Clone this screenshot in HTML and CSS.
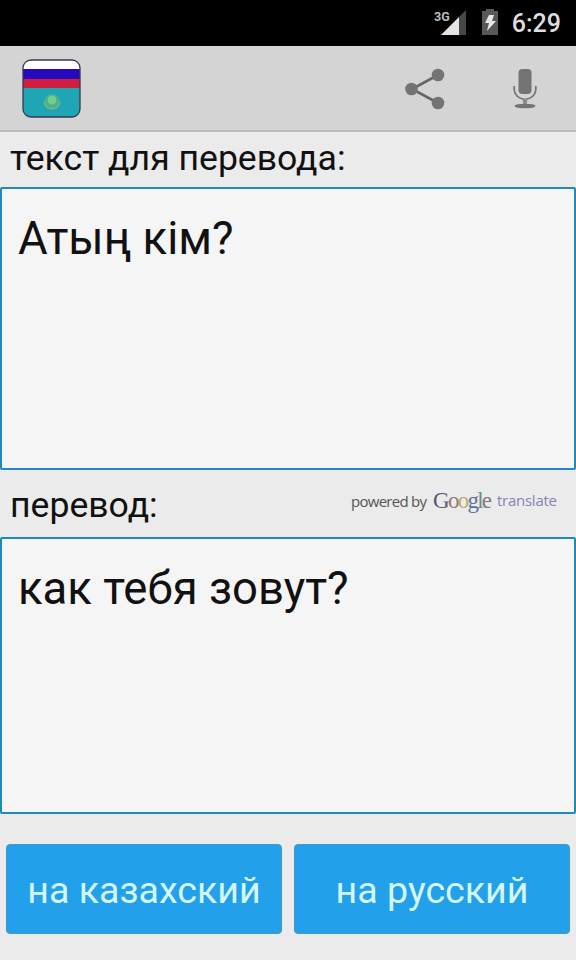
FILE: index.html
```html
<!DOCTYPE html>
<html lang="ru">
<head>
    <meta charset="UTF-8">
    <title>Переводчик</title>
    <link rel="stylesheet" href="styles.css">
</head>
<body>
    <div class="status-bar">
        <svg class="signal" width="34" height="30" viewBox="0 0 34 30">
            <path d="M33 2V27H8z" fill="#484848"/>
            <path d="M26 9V27H8z" fill="#e4e4e4"/>
            <text class="network" x="1" y="12.5">3G</text>
        </svg>
        <svg class="battery" width="16" height="26" viewBox="0 0 16 26">
            <path d="M4 0h8v2h4v24H0V2h4z" fill="#585858"/>
            <path d="M7 6h5l-2 6h4L5 22l2-8H3z" fill="#e8e8e8"/>
        </svg>
        <span class="clock">6:29</span>
    </div>

    <div class="action-bar">
        <svg class="logo" width="60" height="60" viewBox="0 0 60 60">
            <defs>
                <clipPath id="flag"><rect x="1" y="1" width="57" height="57" rx="8"/></clipPath>
            </defs>
            <g clip-path="url(#flag)">
                <rect width="60" height="11" fill="#fff"/>
                <rect y="10" width="60" height="10" fill="#2608bd"/>
                <rect y="20" width="60" height="9" fill="#cf1e3e"/>
                <rect y="29" width="60" height="31" fill="#20a5b5"/>
            </g>
            <circle cx="30" cy="43" r="8" fill="#4aaf94"/>
            <circle cx="30" cy="41" r="4.5" fill="#6fce88"/>
            <path d="M22 43q3 8 8 6q5 2 8-6" fill="none" stroke="#75b783" stroke-width="1.5"/>
            <rect x="1" y="1" width="57" height="57" rx="8" fill="none" stroke="#333a50" stroke-width="1.3"/>
        </svg>
        <svg class="share" width="40" height="42" viewBox="0 0 40 42">
            <path d="M33 7L7 21L33 35" fill="none" stroke="#666" stroke-width="2.6"/>
            <circle cx="33" cy="7" r="6.3" fill="#747474"/>
            <circle cx="6.5" cy="21" r="6.3" fill="#747474"/>
            <circle cx="33" cy="35" r="6.3" fill="#747474"/>
        </svg>
        <svg class="mic" width="24" height="40" viewBox="0 0 24 40">
            <rect x="5.5" y="0" width="13" height="25" rx="4" fill="#737373"/>
            <path d="M1.2 17v4q1 8 10.8 9.5q9.8-1.5 10.8-9.5v-4" fill="none" stroke="#747474" stroke-width="1.7"/>
            <path d="M9.5 30h5l-1 6h-3z" fill="#8a8a8a"/>
            <ellipse cx="12" cy="37" rx="10.5" ry="2.3" fill="#747474"/>
        </svg>
    </div>

    <div class="label-row source-label">
        <span class="label">текст для перевода:</span>
    </div>
    <div class="field source">Атың кім?</div>

    <div class="label-row result-label">
        <span class="label">перевод:</span>
        <svg class="powered" width="210" height="28" viewBox="0 0 210 28">
            <text class="powered-by" x="1" y="18" textLength="76">powered by</text>
            <text class="google" x="83" y="19" textLength="59"><tspan fill="#555b70">G</tspan><tspan fill="#98767a">o</tspan><tspan fill="#b9ad6a">o</tspan><tspan fill="#606fa0">g</tspan><tspan fill="#6f8c7c">l</tspan><tspan fill="#82767e">e</tspan></text>
            <text class="translate" x="147" y="17" textLength="60">translate</text>
        </svg>
    </div>
    <div class="field result">как тебя зовут?</div>

    <div class="buttons">
        <button class="btn">на казахский</button>
        <button class="btn">на русский</button>
    </div>
</body>
</html>
```
FILE: styles.css
```css
* {
    box-sizing: border-box;
}
body {
    margin: 0;
    height: 960px;
    display: flex;
    flex-direction: column;
    overflow: hidden;
    background: #ebebeb;
    color: #111;
    font-family: Roboto, "Noto Sans", sans-serif;
}
svg {
    flex: none;
}
.status-bar {
    height: 46px;
    display: flex;
    align-items: flex-start;
    justify-content: flex-end;
    padding-right: 15px;
    background: #000;
}
.signal {
    margin: 8px 15px 0 0;
}
.network {
    font: bold 12.5px Roboto, sans-serif;
    fill: #bbb;
}
.battery {
    margin: 9px 14px 0 0;
}
.clock {
    color: #ddd;
    font-size: 25px;
    font-weight: 500;
    line-height: 30px;
    margin-top: 9px;
}
.action-bar {
    height: 86px;
    display: flex;
    align-items: center;
    padding: 2px 39px 0 22px;
    background: #d5d4d5;
    border-bottom: 2px solid #bdbdbd;
}
.share {
    margin-left: auto;
}
.mic {
    margin-left: 68px;
}
.label-row {
    display: flex;
    justify-content: space-between;
    padding: 0 16px 0 10px;
}
.source-label {
    height: 55px;
    padding-top: 5px;
}
.result-label {
    height: 67px;
    padding-top: 14px;
}
.label {
    font-size: 35.6px;
    line-height: 42px;
}
.powered {
    margin-top: 5px;
}
.powered-by {
    font: 15px "Open Sans", sans-serif;
    fill: #555;
}
.google {
    font: 23px "Liberation Serif", serif;
}
.translate {
    font: 15px "Open Sans", sans-serif;
    fill: #8783b8;
}
.field {
    border: 2px solid #2189b8;
    border-radius: 2px;
    background: #f5f5f5;
    padding: 23px 16px;
    font-size: 45.5px;
    line-height: 54px;
}
.source {
    height: 283px;
}
.result {
    height: 277px;
}
.buttons {
    display: flex;
    gap: 12px;
    padding: 30px 6px 0;
}
.btn {
    flex: 1;
    height: 90px;
    padding: 2px 0 0;
    border: 1px solid #3c98cd;
    border-radius: 4px;
    background: #22a0e9;
    color: #d4f7ff;
    font-family: inherit;
    font-size: 37.6px;
    white-space: nowrap;
}
```
